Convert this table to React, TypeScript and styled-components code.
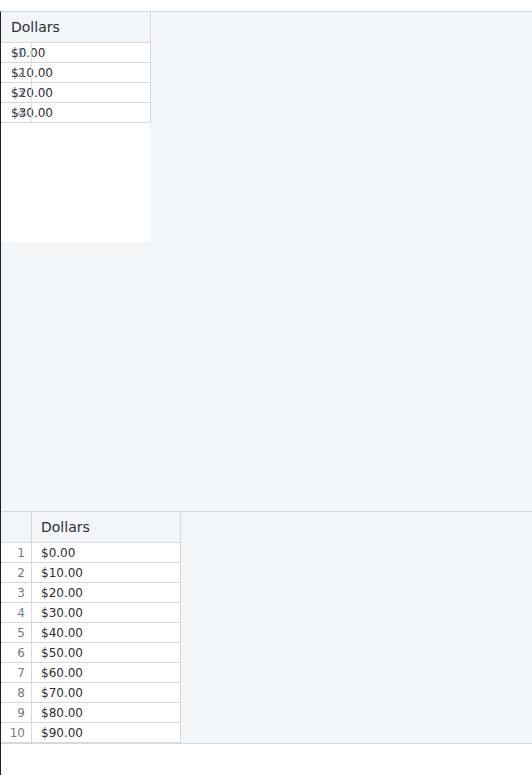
import React from "react";
import styled, { createGlobalStyle } from "styled-components";

const GlobalStyle = createGlobalStyle`
  html, body { margin: 0; padding: 0; background: #ffffff; }
  body { font-family: "DejaVu Sans", "Noto Sans", sans-serif; }
`;

const BORDER = "#d5d8dc";
const BG = "#f3f6f9";
const TEXT = "#2b2d33";
const MUTED = "#6f7b88";

const Page = styled.div`
  padding-top: 11px;
  min-height: 776px;
  box-sizing: border-box;
`;

const Frame = styled.div`
  border-top: 1px solid ${BORDER};
  border-left: 1px solid #1b202a;
  min-height: 764px;
  box-sizing: border-box;
`;

const TopPanel = styled.div`
  height: 499px;
  background: ${BG};
`;

const TopGrid = styled.div`
  width: 150px;
`;

const HeaderCell = styled.div<{ $w: number; $pad: number }>`
  width: ${(p) => p.$w}px;
  height: 30px;
  box-sizing: content-box;
  padding-left: ${(p) => p.$pad}px;
  display: flex;
  align-items: center;
  font-size: 14px;
  color: ${TEXT};
  background: ${BG};
  border-bottom: 1px solid ${BORDER};
  border-right: 1px solid ${BORDER};
`;

const TopBody = styled.div`
  background: #ffffff;
  height: 199px;
`;

const GlitchRow = styled.div`
  position: relative;
  height: 19px;
  border-bottom: 1px solid ${BORDER};
  border-right: 1px solid ${BORDER};
  display: flex;
  align-items: center;
  padding-left: 10px;
  font-size: 12px;
  color: ${TEXT};
`;

const GlitchMarker = styled.span`
  position: absolute;
  left: 0;
  top: 0;
  bottom: 0;
  width: 24px;
  padding-right: 6px;
  border-right: 1px solid ${BORDER};
  display: flex;
  align-items: center;
  justify-content: flex-end;
  font-size: 12px;
  color: ${MUTED};
  opacity: 0.8;
`;

const BottomSection = styled.div`
  border-top: 1px solid ${BORDER};
  border-bottom: 1px solid ${BORDER};
  background: ${BG};
`;

const Grid = styled.div`
  display: flex;
  flex-direction: column;
  width: 180px;
`;

const HeaderRow = styled.div`
  display: flex;
`;

const Row = styled.div`
  display: flex;
  height: 19px;
  border-bottom: 1px solid ${BORDER};
  background: #ffffff;
  font-size: 12px;
`;

const Marker = styled.div`
  width: 24px;
  padding-right: 6px;
  border-right: 1px solid ${BORDER};
  display: flex;
  align-items: center;
  justify-content: flex-end;
  color: ${MUTED};
`;

const Cell = styled.div`
  flex: 1;
  padding-left: 9px;
  border-right: 1px solid ${BORDER};
  display: flex;
  align-items: center;
  color: ${TEXT};
`;

const MarkerHeader = styled.div`
  width: 30px;
  height: 30px;
  background: ${BG};
  border-right: 1px solid ${BORDER};
  border-bottom: 1px solid ${BORDER};
`;

const values = Array.from({ length: 10 }, (_, i) => `$${i * 10}.00`);

export default function App() {
  return (
    <>
      <GlobalStyle />
      <Page>
        <Frame>
          <TopPanel>
            <TopGrid>
              <HeaderCell $w={139} $pad={10}>
                Dollars
              </HeaderCell>
              <TopBody>
                {values.slice(0, 4).map((v, i) => (
                  <GlitchRow key={v}>
                    <GlitchMarker>{i + 1}</GlitchMarker>
                    {v}
                  </GlitchRow>
                ))}
              </TopBody>
            </TopGrid>
          </TopPanel>
          <BottomSection>
            <Grid>
              <HeaderRow>
                <MarkerHeader />
                <HeaderCell $w={139} $pad={9}>
                  Dollars
                </HeaderCell>
              </HeaderRow>
              {values.map((v, i) => (
                <Row key={v}>
                  <Marker>{i + 1}</Marker>
                  <Cell>{v}</Cell>
                </Row>
              ))}
            </Grid>
          </BottomSection>
        </Frame>
      </Page>
    </>
  );
}
